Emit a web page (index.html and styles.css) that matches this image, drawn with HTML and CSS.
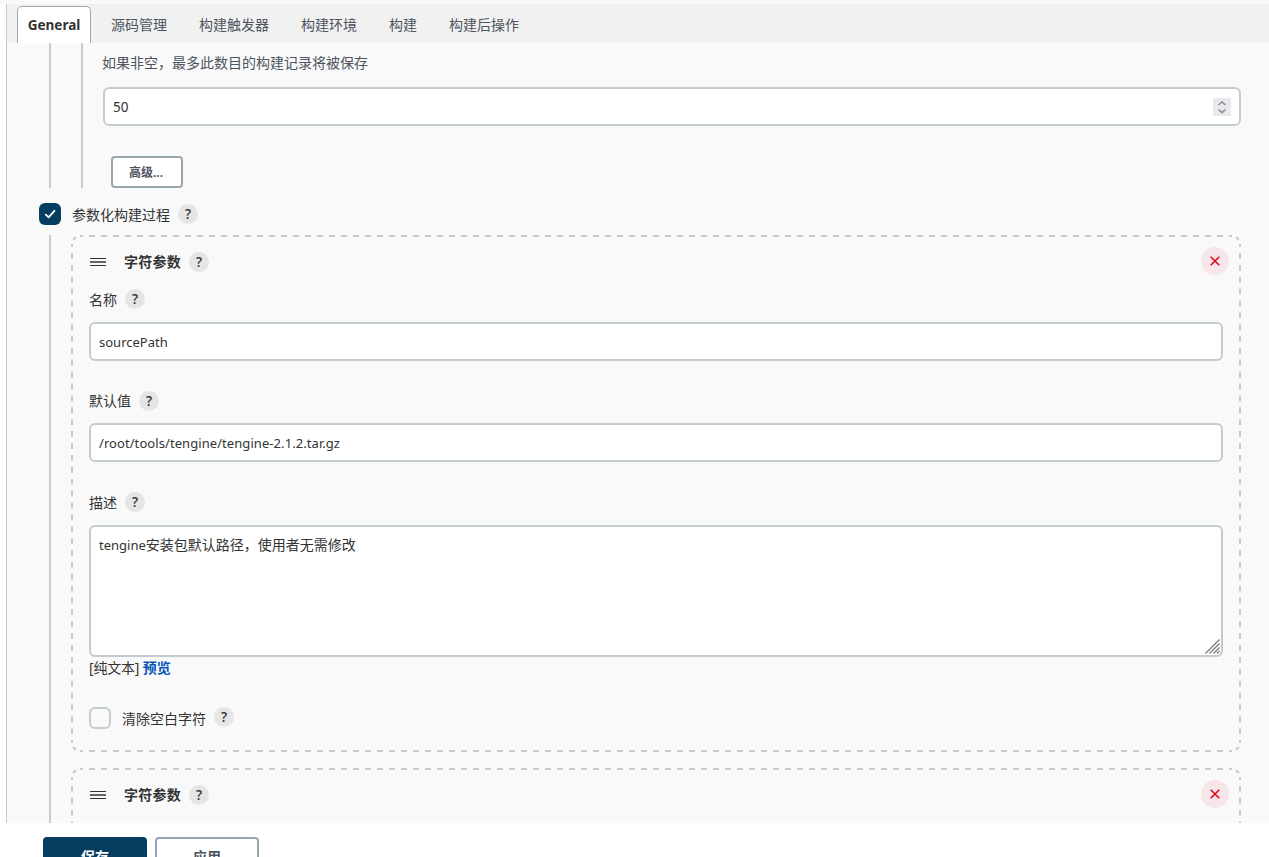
FILE: index.html
```html
<!DOCTYPE html>
<html lang="zh-CN">
<head>
<meta charset="utf-8">
<title>General</title>
<link rel="stylesheet" href="styles.css">
</head>
<body>
<main class="page">
  <nav class="tabs">
    <a class="tab active">General</a><a class="tab">源码管理</a><a class="tab">构建触发器</a><a class="tab">构建环境</a><a class="tab">构建</a><a class="tab">构建后操作</a>
  </nav>
  <div class="content">
    <section class="nest">
      <div class="nest-inner">
        <p class="hint">如果非空，最多此数目的构建记录将被保存</p>
        <div class="field number"><span>50</span>
          <svg class="spinner" viewBox="0 0 18 18"><path d="M5.5 7 9 3.8 12.5 7M5.5 11.5 9 14.7 12.5 11.5"/></svg>
        </div>
        <button class="btn advanced">高级...</button>
      </div>
    </section>
    <div class="row option">
      <span class="check checked"><svg viewBox="0 0 22 22"><path d="M6.8 11.6 9.6 14.4 15.4 7.8"/></svg></span>
      <span class="option-label">参数化构建过程</span><span class="help">?</span>
    </div>
    <section class="params">
      <div class="card">
        <svg class="outline" width="1170" height="517">
          <path class="side" pathLength="1152" d="M9 1H1161"/><path class="side" pathLength="1152" d="M9 516H1161"/>
          <path class="side" pathLength="504" d="M1 9V508"/><path class="side" pathLength="504" d="M1169 9V508"/>
          <path d="M2.2 4.8 4.8 2.2M1165.2 2.2 1167.8 4.8M2.2 512.2 4.8 514.8M1165.2 514.8 1167.8 512.2"/>
        </svg>
        <header class="row card-head">
          <svg class="grip" viewBox="0 0 16 10"><path d="M0 1.5H16M0 8.5H16"/><path class="mid" d="M0 5H16"/></svg>
          <b class="card-title">字符参数</b><span class="help">?</span>
          <span class="remove"><svg viewBox="0 0 28 28"><path d="M9.7 9.7 18.3 18.3M18.3 9.7 9.7 18.3"/></svg></span>
        </header>
        <div class="row label name"><span>名称</span><span class="help">?</span></div>
        <div class="field">sourcePath</div>
        <div class="row label default"><span>默认值</span><span class="help">?</span></div>
        <div class="field path">/root/tools/tengine/tengine-2.1.2.tar.gz</div>
        <div class="row label desc"><span>描述</span><span class="help">?</span></div>
        <div class="field area"><span class="latin">tengine</span>安装包默认路径，使用者无需修改
          <svg class="resizer" viewBox="0 0 15 15"><path d="M.5 14.5 14.5 .5M4.5 14.5 14.5 4.5M8.5 14.5 14.5 8.5M12 14.5 14.5 12"/></svg>
        </div>
        <div class="preview">[纯文本] <a>预览</a></div>
        <div class="row trim"><span class="check"></span><span class="trim-label">清除空白字符</span><span class="help">?</span></div>
      </div>
      <div class="card next">
        <svg class="outline" width="1170" height="517">
          <path class="side" pathLength="1152" d="M9 1H1161"/>
          <path class="side" pathLength="504" d="M1 9V508"/><path class="side" pathLength="504" d="M1169 9V508"/>
          <path d="M2.2 4.8 4.8 2.2M1165.2 2.2 1167.8 4.8"/>
        </svg>
        <header class="row card-head">
          <svg class="grip" viewBox="0 0 16 10"><path d="M0 1.5H16M0 8.5H16"/><path class="mid" d="M0 5H16"/></svg>
          <b class="card-title">字符参数</b><span class="help">?</span>
          <span class="remove"><svg viewBox="0 0 28 28"><path d="M9.7 9.7 18.3 18.3M18.3 9.7 9.7 18.3"/></svg></span>
        </header>
      </div>
    </section>
  </div>
</main>
<footer class="actions"><button class="btn primary">保存</button><button class="btn apply">应用</button></footer>
</body>
</html>
```
FILE: styles.css
```css
* { box-sizing: border-box; }
html, body { height: 857px; overflow: hidden; }
body {
  margin: 0;
  border-top: 4px solid #f9f9f9;
  background: #fff;
  color: #333;
  font: 14px/20px "Noto Sans", "Noto Sans CJK SC", sans-serif;
}
.page {
  height: 819px;
  margin-left: 6px;
  border-left: 1px solid #c3ccd1;
  background: #f9f9f9;
  overflow: hidden;
}
.tabs {
  display: flex;
  height: 39px;
  padding: 2px 0 0 10px;
  background: #f1f1f1;
  color: #4d545d;
}
.tab { height: 37px; padding: 9px 16px 0; white-space: nowrap; }
.tab.active {
  width: 74px;
  margin-right: 4px;
  padding: 8px 0 0;
  border: 1px solid #9ba8b1;
  border-bottom: 0;
  border-radius: 5px 5px 0 0;
  background: #fff;
  color: #333;
  font-weight: 700;
  font-size: 13.5px;
  text-align: center;
}
.content { height: 780px; padding: 0 28px 0 32px; overflow: hidden; }
.nest { height: 145px; margin-left: 10px; padding-left: 30px; border-left: 2px solid #c3cdd1; }
.nest-inner { height: 145px; padding: 10px 0 0 20px; border-left: 2px solid #c3cdd1; }
.hint { margin: 0 0 14px -1px; color: #4d545d; }
.field {
  position: relative;
  height: 39px;
  padding: 8px 8px 0;
  border: 2px solid #c3cdd1;
  border-radius: 6px;
  background: #fff;
  font-size: 13px;
}
.path { letter-spacing: .07px; }
.number { display: flex; justify-content: space-between; font-size: 13.5px; }
.spinner { width: 18px; height: 18px; margin-top: 1px; background: #e9e9ed; }
.spinner path { fill: none; stroke: #8f8f9d; stroke-width: 1.6; }
.btn {
  border: 2px solid #98a6af;
  border-radius: 4px;
  background: #fff;
  color: #4d545d;
  font: 600 12px/20px "Noto Sans", "Noto Sans CJK SC", sans-serif;
  padding: 0;
}
.advanced { display: block; width: 72px; height: 32px; margin: 30px 0 0 8px; padding: 2px 2px 0 0; }
.row { display: flex; align-items: center; }
.option { height: 22px; margin-top: 15px; }
.check { width: 22px; height: 22px; border: 2px solid #c3cdd1; border-radius: 6px; }
.checked { border: 0; background: #063e61; }
.checked svg { display: block; }
.checked path { fill: none; stroke: #fff; stroke-width: 1.8; stroke-linecap: round; stroke-linejoin: round; }
.option-label { margin: 1px 0 0 11px; }
.help {
  width: 20px;
  height: 20px;
  margin-left: 8px;
  border-radius: 50%;
  background: #e5e5e5;
  font: 600 13.5px/21px "Open Sans", sans-serif;
  text-align: center;
}
.params { height: 600px; margin: 10px 0 0 10px; padding-left: 20px; border-left: 2px solid #c3cdd1; }
.card { position: relative; height: 517px; padding: 12px 18px; }
.next { margin-top: 16px; }
.outline { position: absolute; top: 0; left: 0; }
.outline path { fill: none; stroke: #c3cdd1; stroke-width: 2; }
.outline .side { stroke-dasharray: 6 6; stroke-dashoffset: 3; }
.card-head { position: relative; height: 28px; margin-right: -6px; }
.grip { width: 16px; height: 10px; margin: 1px 18px 0 1px; }
.grip path { stroke: #333; stroke-width: 1; }
.grip .mid { stroke: #666; stroke-width: 2; }
.card-title { margin-top: 1px; letter-spacing: .25px; }
.card-head .help { margin-top: 1px; }
.remove { width: 28px; height: 28px; margin-left: auto; border-radius: 50%; background: #f6e5e9; }
.remove svg { display: block; }
.remove path { stroke: #e00018; stroke-width: 1.5; }
.label { height: 20px; }
.name { margin: 14px 0 13px; }
.default { margin: 30px 0 12px; }
.desc { margin: 30px 0 13px; }
.name > span:first-child, .desc > span:first-child { margin-top: 2px; }
.area { height: 132px; font-size: 14px; }
.latin { font-size: 13px; }
.resizer { position: absolute; right: 1px; bottom: 1px; width: 15px; height: 15px; }
.resizer path { fill: none; stroke: #777; stroke-width: 1.2; }
.preview { margin-top: 1px; height: 20px; letter-spacing: -.2px; }
.preview a { color: #0b55b8; font-weight: 700; letter-spacing: 0; }
.trim { height: 22px; margin-top: 29px; }
.trim-label { margin: 1px 0 0 11px; }
.trim .help { margin-top: -2px; }
.actions { display: flex; gap: 8px; padding: 14px 0 0 43px; }
.actions .btn { width: 104px; height: 38px; padding-top: 2px; font-size: 14px; }
.actions .primary { border-color: #063e61; background: #063e61; color: #fff; }
```
